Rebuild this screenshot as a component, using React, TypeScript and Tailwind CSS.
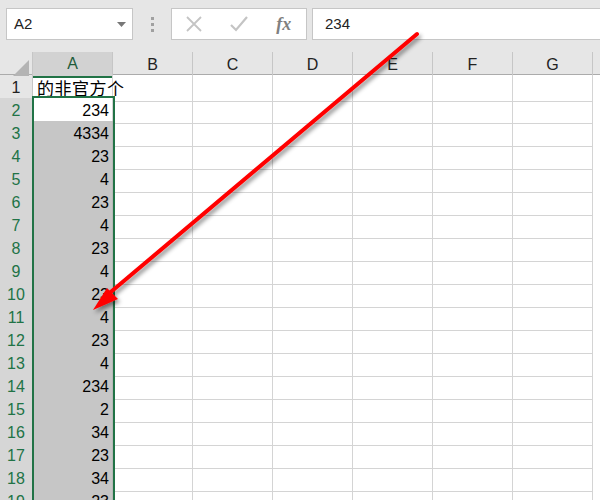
import React from 'react'

const cols = ['A', 'B', 'C', 'D', 'E', 'F', 'G', '']
const values = ['234', '4334', '23', '4', '23', '4', '23', '4', '23', '4', '23', '4', '234', '2', '34', '23', '34', '23']

const font = { fontFamily: '"Liberation Sans", "Noto Sans CJK SC", sans-serif' }

function Toolbar() {
  return (
    <div className="h-[52px] bg-[#e6e6e6] pt-[8px] flex items-start">
      <div className="ml-[6px] w-[127px] h-[32px] bg-white border border-[#c6c6c6] flex items-center pl-[7px] pr-[6px]">
        <span className="text-[15px] text-[#222] flex-1">A2</span>
        <svg width="9" height="5" viewBox="0 0 9 5">
          <path d="M0 0 L9 0 L4.5 5 Z" fill="#777" />
        </svg>
      </div>
      <div className="w-[38px] h-[32px] flex flex-col items-center justify-center gap-[3px]">
        <span className="w-[3px] h-[3px] bg-[#a0a0a0]" />
        <span className="w-[3px] h-[3px] bg-[#a0a0a0]" />
        <span className="w-[3px] h-[3px] bg-[#a0a0a0]" />
      </div>
      <div className="w-[136px] h-[32px] bg-white border border-[#c6c6c6] flex items-center">
        <div className="w-[45px] flex justify-center">
          <svg width="16" height="16" viewBox="0 0 16 16">
            <path d="M1 1 L15 15 M15 1 L1 15" stroke="#c4c4c4" strokeWidth="1.8" />
          </svg>
        </div>
        <div className="w-[45px] flex justify-center">
          <svg width="18" height="16" viewBox="0 0 18 16">
            <path d="M1 9 L6 14 L17 1" stroke="#c4c4c4" strokeWidth="2.2" fill="none" />
          </svg>
        </div>
        <div className="w-[45px] flex justify-center">
          <span className="italic font-semibold text-[18px] text-[#808080]" style={{ fontFamily: '"Liberation Serif", serif' }}>
            fx
          </span>
        </div>
      </div>
      <div className="ml-[5px] flex-1 h-[32px] bg-white border border-[#c6c6c6] border-r-0 flex items-center pl-[12px]">
        <span className="text-[15px] text-[#222]">234</span>
      </div>
    </div>
  )
}

function HeaderRow() {
  return (
    <div className="grid grid-cols-[33px_80px_80px_80px_80px_80px_80px_80px] h-[23px] bg-[#e6e6e6] border-b border-[#ababab]">
      <div className="relative border-r border-[#c6c6c6]">
        <svg className="absolute right-[3px] bottom-[2px]" width="16" height="16" viewBox="0 0 16 16">
          <path d="M16 0 L16 16 L0 16 Z" fill="#b4b4b4" />
        </svg>
      </div>
      {cols.map((c, i) => (
        <div
          key={i}
          className={
            i === 0
              ? 'bg-[#d2d2d2] border-r border-[#c6c6c6] border-b-2 border-b-[#217346] text-[#1e5b3a] text-[16px] flex items-center justify-center'
              : 'border-r border-[#c6c6c6] text-[#222] text-[16px] flex items-center justify-center'
          }
        >
          {c}
        </div>
      ))}
    </div>
  )
}

function Row({ n, value }: { n: number; value: string }) {
  const selected = n >= 2
  return (
    <div className="grid grid-cols-[33px_80px_80px_80px_80px_80px_80px_80px] h-[23px]">
      <div
        className={
          selected
            ? 'bg-[#d6d6d6] border-r border-b border-[#c6c6c6] text-[#217346] text-[16px] flex items-center justify-center pt-[1px]'
            : 'bg-[#e6e6e6] border-r border-b border-[#c6c6c6] text-[#222] text-[16px] flex items-center justify-center pt-[1px]'
        }
      >
        {n}
      </div>
      {n === 1 ? (
        <div
          className="border-r border-b border-[#d4d4d4] text-[17px] text-black flex items-center pl-[4px] whitespace-nowrap overflow-visible"
          style={{ fontFamily: '"Noto Sans CJK SC", sans-serif', letterSpacing: '0.5px' }}
        >
          的非官方个
        </div>
      ) : (
        <div
          className={
            n === 2
              ? 'bg-white border-r border-b border-[#d4d4d4] text-[16px] text-black flex items-center justify-end pr-[3px] pt-[1px]'
              : 'bg-[#c6c6c6] border-r border-b border-[#b8b8b8] text-[16px] text-black flex items-center justify-end pr-[3px] pt-[1px]'
          }
        >
          {value}
        </div>
      )}
      {cols.slice(1).map((_, i) => (
        <div key={i} className="border-r border-b border-[#d4d4d4]" />
      ))}
    </div>
  )
}

function Arrow() {
  return (
    <svg className="absolute left-0 top-0 pointer-events-none" width="600" height="500" viewBox="0 0 600 500">
      <defs>
        <filter id="sh" x="-20%" y="-20%" width="140%" height="140%">
          <feDropShadow dx="2" dy="3" stdDeviation="2" floodColor="#000" floodOpacity="0.45" />
        </filter>
      </defs>
      <g filter="url(#sh)">
        <line x1="417" y1="34" x2="106" y2="296" stroke="#ff0000" strokeWidth="4" strokeLinecap="round" />
        <path d="M93 310 L107 288 L118 299 Z" fill="#ff0000" />
      </g>
    </svg>
  )
}

export default function App() {
  return (
    <div className="w-[600px] h-[500px] overflow-hidden bg-white relative" style={font}>
      <Toolbar />
      <HeaderRow />
      {Array.from({ length: 19 }, (_, i) => (
        <Row key={i} n={i + 1} value={i === 0 ? '' : values[(i - 1) % values.length]} />
      ))}
      <div className="absolute left-[32px] top-[96px] w-[83px] h-[420px] border-2 border-b-0 border-[#217346] pointer-events-none" />
      <Arrow />
    </div>
  )
}
